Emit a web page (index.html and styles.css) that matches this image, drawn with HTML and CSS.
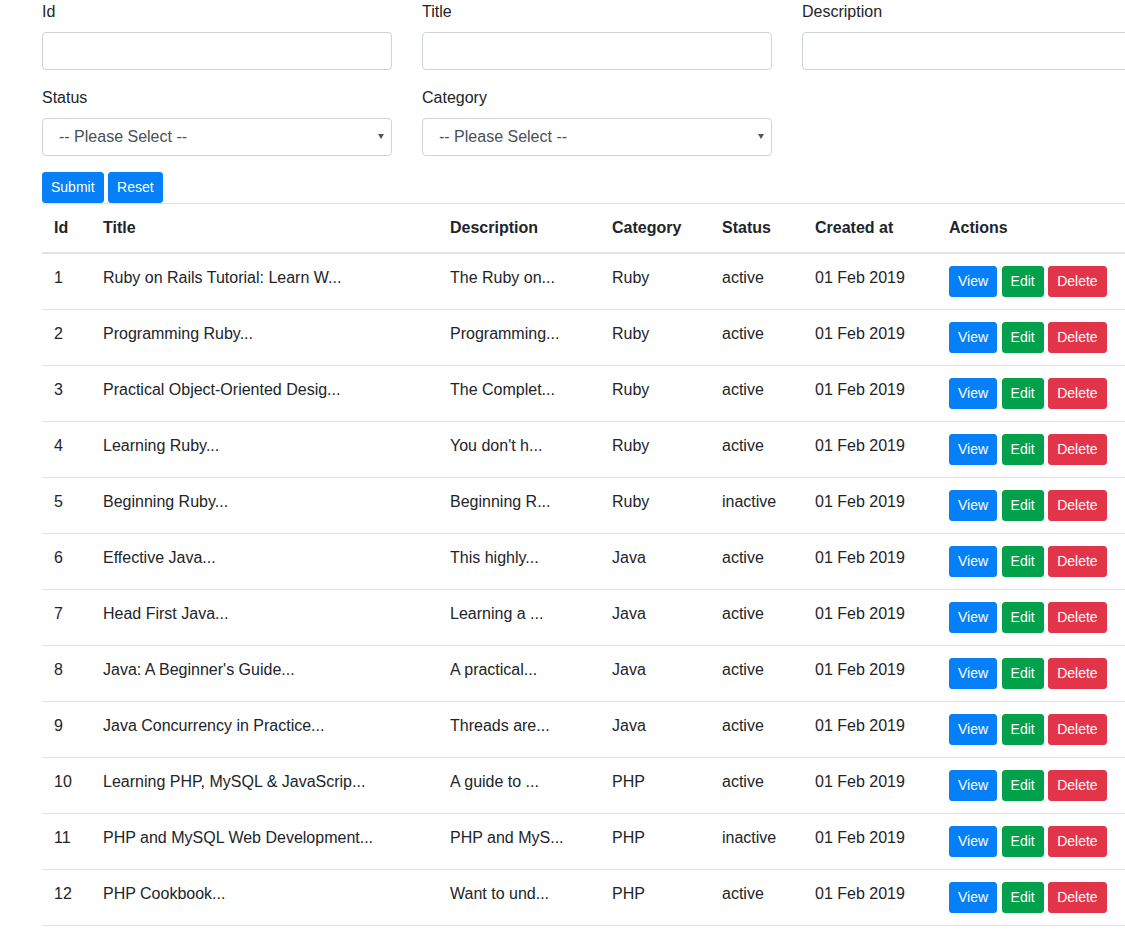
FILE: index.html
```html
<!DOCTYPE html>
<html lang="en">
<head>
<meta charset="utf-8">
<title>Books</title>
<link rel="stylesheet" href="styles.css">
</head>
<body>
<main class="page">
  <form class="filter">
    <div class="fields">
      <div class="field">
        <label class="label" for="f-id">Id</label>
        <input class="control" id="f-id" type="text">
      </div>
      <div class="field">
        <label class="label" for="f-title">Title</label>
        <input class="control" id="f-title" type="text">
      </div>
      <div class="field">
        <label class="label" for="f-desc">Description</label>
        <input class="control" id="f-desc" type="text">
      </div>
      <div class="field">
        <label class="label" for="f-status">Status</label>
        <div class="select-wrap">
          <select class="control select" id="f-status">
            <option>-- Please Select --</option>
            <option>active</option>
            <option>inactive</option>
          </select>
        </div>
      </div>
      <div class="field">
        <label class="label" for="f-cat">Category</label>
        <div class="select-wrap">
          <select class="control select" id="f-cat">
            <option>-- Please Select --</option>
            <option>Ruby</option>
            <option>Java</option>
            <option>PHP</option>
          </select>
        </div>
      </div>
    </div>
    <div class="form-actions"><button type="submit" class="btn btn-primary">Submit</button> <button type="reset" class="btn btn-primary">Reset</button></div>
  </form>

  <table class="table">
    <colgroup>
      <col class="c-id"><col class="c-title"><col class="c-desc"><col class="c-cat"><col class="c-status"><col class="c-created"><col class="c-actions">
    </colgroup>
    <thead>
      <tr><th>Id</th><th>Title</th><th>Description</th><th>Category</th><th>Status</th><th>Created at</th><th>Actions</th></tr>
    </thead>
    <tbody>
      <tr><td>1</td><td>Ruby on Rails Tutorial: Learn W...</td><td>The Ruby on...</td><td>Ruby</td><td>active</td><td>01 Feb 2019</td><td><a class="btn btn-primary">View</a> <a class="btn btn-success">Edit</a> <a class="btn btn-danger">Delete</a></td></tr>
      <tr><td>2</td><td>Programming Ruby...</td><td>Programming...</td><td>Ruby</td><td>active</td><td>01 Feb 2019</td><td><a class="btn btn-primary">View</a> <a class="btn btn-success">Edit</a> <a class="btn btn-danger">Delete</a></td></tr>
      <tr><td>3</td><td>Practical Object-Oriented Desig...</td><td>The Complet...</td><td>Ruby</td><td>active</td><td>01 Feb 2019</td><td><a class="btn btn-primary">View</a> <a class="btn btn-success">Edit</a> <a class="btn btn-danger">Delete</a></td></tr>
      <tr><td>4</td><td>Learning Ruby...</td><td>You don't h...</td><td>Ruby</td><td>active</td><td>01 Feb 2019</td><td><a class="btn btn-primary">View</a> <a class="btn btn-success">Edit</a> <a class="btn btn-danger">Delete</a></td></tr>
      <tr><td>5</td><td>Beginning Ruby...</td><td>Beginning R...</td><td>Ruby</td><td>inactive</td><td>01 Feb 2019</td><td><a class="btn btn-primary">View</a> <a class="btn btn-success">Edit</a> <a class="btn btn-danger">Delete</a></td></tr>
      <tr><td>6</td><td>Effective Java...</td><td>This highly...</td><td>Java</td><td>active</td><td>01 Feb 2019</td><td><a class="btn btn-primary">View</a> <a class="btn btn-success">Edit</a> <a class="btn btn-danger">Delete</a></td></tr>
      <tr><td>7</td><td>Head First Java...</td><td>Learning a ...</td><td>Java</td><td>active</td><td>01 Feb 2019</td><td><a class="btn btn-primary">View</a> <a class="btn btn-success">Edit</a> <a class="btn btn-danger">Delete</a></td></tr>
      <tr><td>8</td><td>Java: A Beginner's Guide...</td><td>A practical...</td><td>Java</td><td>active</td><td>01 Feb 2019</td><td><a class="btn btn-primary">View</a> <a class="btn btn-success">Edit</a> <a class="btn btn-danger">Delete</a></td></tr>
      <tr><td>9</td><td>Java Concurrency in Practice...</td><td>Threads are...</td><td>Java</td><td>active</td><td>01 Feb 2019</td><td><a class="btn btn-primary">View</a> <a class="btn btn-success">Edit</a> <a class="btn btn-danger">Delete</a></td></tr>
      <tr><td>10</td><td>Learning PHP, MySQL &amp; JavaScrip...</td><td>A guide to ...</td><td>PHP</td><td>active</td><td>01 Feb 2019</td><td><a class="btn btn-primary">View</a> <a class="btn btn-success">Edit</a> <a class="btn btn-danger">Delete</a></td></tr>
      <tr><td>11</td><td>PHP and MySQL Web Development...</td><td>PHP and MyS...</td><td>PHP</td><td>inactive</td><td>01 Feb 2019</td><td><a class="btn btn-primary">View</a> <a class="btn btn-success">Edit</a> <a class="btn btn-danger">Delete</a></td></tr>
      <tr><td>12</td><td>PHP Cookbook...</td><td>Want to und...</td><td>PHP</td><td>active</td><td>01 Feb 2019</td><td><a class="btn btn-primary">View</a> <a class="btn btn-success">Edit</a> <a class="btn btn-danger">Delete</a></td></tr>
    </tbody>
  </table>
</main>
</body>
</html>
```

FILE: styles.css
```css
html, body {
  margin: 0;
  padding: 0;
  overflow: hidden;
  background: #fff;
}

body {
  font-family: "Liberation Sans", Arial, sans-serif;
  font-size: 16px;
  line-height: 1.5;
  color: #212529;
}

.page {
  padding-left: 42px;
  width: 1110px;
}

.fields {
  display: grid;
  grid-template-columns: 350px 350px 350px;
  column-gap: 30px;
}

.field {
  display: flex;
  flex-direction: column;
  margin-bottom: 16px;
}

.label {
  display: block;
  margin-bottom: 8px;
  line-height: 24px;
}

.control {
  box-sizing: border-box;
  display: block;
  width: 100%;
  height: 38px;
  padding: 6px 12px;
  font-family: inherit;
  font-size: 16px;
  line-height: 1.5;
  color: #495057;
  background-color: #fff;
  border: 1px solid #ced4da;
  border-radius: 4px;
  margin: 0;
}

.select-wrap {
  position: relative;
}

.select {
  -webkit-appearance: none;
  appearance: none;
  padding-left: 16px;
  padding-right: 24px;
}

.select-wrap::after {
  content: "";
  position: absolute;
  right: 8px;
  top: 16px;
  width: 0;
  height: 0;
  border-left: 3px solid transparent;
  border-right: 3px solid transparent;
  border-top: 5px solid #555;
  pointer-events: none;
}

.form-actions {
  font-size: 16px;
  line-height: 0;
}

.btn {
  display: inline-block;
  box-sizing: border-box;
  font-family: inherit;
  font-size: 14px;
  line-height: 21px;
  padding: 4px 8px;
  border: 1px solid transparent;
  border-radius: 3px;
  color: #fff;
  vertical-align: middle;
  text-align: center;
  cursor: pointer;
  margin: 0;
}

.btn-primary { background-color: #0580f8; border-color: #0580f8; }
.btn-success { background-color: #01a14b; border-color: #01a14b; }
.btn-danger  { background-color: #e2354a; border-color: #e2354a; }

.table {
  width: 1110px;
  border-collapse: collapse;
  table-layout: fixed;
  color: #212529;
}

.c-id { width: 49px; }
.c-title { width: 347px; }
.c-desc { width: 162px; }
.c-cat { width: 110px; }
.c-status { width: 93px; }
.c-created { width: 134px; }
.c-actions { width: 215px; }

.table th,
.table td {
  padding: 12px;
  text-align: left;
  vertical-align: top;
  border-top: 1px solid #dee2e6;
  white-space: nowrap;
}

.table tbody tr:last-child td {
  border-bottom: 1px solid #dee2e6;
}

.table th {
  font-weight: bold;
  vertical-align: bottom;
  border-bottom: 2px solid #dee2e6;
}
```
